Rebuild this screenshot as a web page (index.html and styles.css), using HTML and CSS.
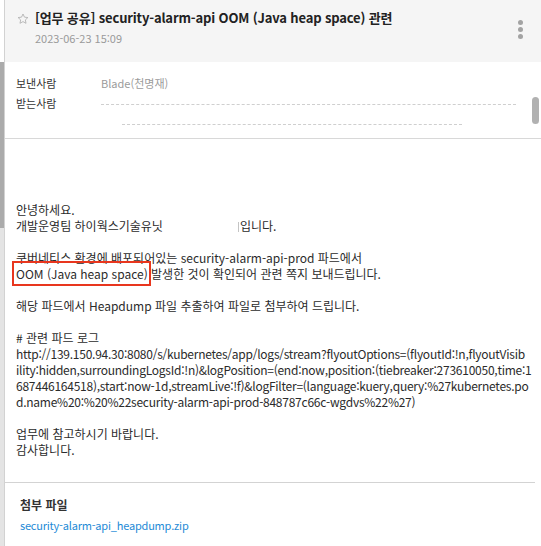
FILE: index.html
```html
<!DOCTYPE html>
<html lang="ko">
<head>
<meta charset="utf-8">
<title>[업무 공유] security-alarm-api OOM (Java heap space) 관련</title>
<link rel="stylesheet" href="styles.css">
</head>
<body>
<div class="frame">
  <div class="rail">
    <div class="rail-top"></div>
    <div class="rail-dark"></div>
    <div class="rail-light"></div>
  </div>
  <div class="main">
    <header class="head">
      <svg class="star" width="12" height="12" viewBox="0 0 24 24" aria-hidden="true">
        <path d="M12 2l2.95 6.3 6.85.8-5.1 4.7 1.35 6.8L12 17.2l-6.05 3.4 1.35-6.8-5.1-4.7 6.85-.8z" fill="none" stroke="#b0b0b0" stroke-width="1.7" stroke-linejoin="round"/>
      </svg>
      <div class="head-text">
        <h1 class="title">[업무 공유] security-alarm-api OOM (Java heap space) 관련</h1>
        <div class="date">2023-06-23 15:09</div>
      </div>
      <div class="kebab"><span></span><span></span><span></span></div>
    </header>

    <section class="info">
      <div class="row"><span class="label">보낸사람</span><span class="value">Blade(천명재)</span></div>
      <div class="row"><span class="label">받는사람</span><span class="blur blur-a"></span></div>
      <div class="row"><span class="label"></span><span class="blur blur-b"></span></div>
      <div class="thumb"></div>
    </section>

    <section class="content">
      <p>안녕하세요.<br>개발운영팀 하이웍스기술유닛<span class="gap"></span><span class="tick"></span>입니다.</p>
      <p>쿠버네티스 환경에 배포되어있는 security-alarm-api-prod 파드에서<br><span class="mark">OOM (Java heap space)</span> 발생한 것이 확인되어 관련 쪽지 보내드립니다.</p>
      <p>해당 파드에서 Heapdump 파일 추출하여 파일로 첨부하여 드립니다.</p>
      <p># 관련 파드 로그<br><span class="url">http://139.150.94.30:8080/s/kubernetes/app/logs/stream?flyoutOptions=(flyoutId:!n,flyoutVisib<br>ility:hidden,surroundingLogsId:!n)&amp;logPosition=(end:now,position:(tiebreaker:273610050,time:1<br>687446164518),start:now-1d,streamLive:!f)&amp;logFilter=(language:kuery,query:%27kubernetes.po<br>d.name%20:%20%22security-alarm-api-prod-848787c66c-wgdvs%22%27)</span></p>
      <p>업무에 참고하시기 바랍니다.<br>감사합니다.</p>
    </section>

    <section class="attach">
      <div class="attach-title">첨부 파일</div>
      <a class="attach-link" href="#">security-alarm-api_heapdump.zip</a>
    </section>
  </div>
</div>
</body>
</html>
```

FILE: styles.css
```css
* { box-sizing: border-box; }
html, body { margin: 0; padding: 0; background: #fff; }
body {
  font-family: "Noto Sans CJK KR", "Noto Sans", sans-serif;
  color: #2b2b2b;
  width: 541px;
  height: 546px;
  overflow: hidden;
}
.frame { display: flex; height: 546px; }
.rail {
  width: 5px;
  flex: none;
  display: flex;
  flex-direction: column;
  border-right: 1px solid #d2d2d2;
}
.rail-top { height: 62px; background: #fff; }
.rail-dark { height: 166px; background: #ababab; }
.rail-light { flex: 1; background: #e4e4e4; }

.main { flex: 1; min-width: 0; display: flex; flex-direction: column; }

.head {
  height: 62px;
  background: #f5f5f5;
  display: flex;
  align-items: flex-start;
  padding: 9px 0 0 12px;
}
.star { margin-top: 4px; flex: none; }
.head-text { margin-left: 6px; flex: 1; }
.title {
  margin: 0;
  font-size: 13px;
  line-height: 18px;
  font-weight: 700;
  letter-spacing: -0.15px;
  color: #222;
}
.date {
  margin-top: 3px;
  font-size: 11px;
  line-height: 16px;
  color: #9a9a9a;
}
.kebab {
  display: flex;
  flex-direction: column;
  gap: 2px;
  margin: 11px 18px 0 0;
}
.kebab span {
  width: 5px;
  height: 5px;
  border-radius: 50%;
  background: #a3a3a3;
}

.info {
  position: relative;
  padding: 11px 0 5px 11px;
  border-bottom: 1px solid #d8d8d8;
}
.row { display: flex; align-items: center; height: 20px; font-size: 11px; }
.label { width: 85px; color: #333; flex: none; }
.value { color: #9b9b9b; }
.blur {
  display: block;
  height: 1px;
  border-top: 1px dashed #cfcfcf;
  margin-top: 2px;
}
.blur-a { width: 415px; }
.blur-b { width: 340px; margin-left: 21px; }
.thumb {
  position: absolute;
  right: 2px;
  top: 35px;
  width: 7px;
  height: 27px;
  border-radius: 4px;
  background: #b1b1b1;
}

.content {
  padding: 63px 0 8px 11px;
  font-size: 12px;
  line-height: 16px;
  color: #2b2b2b;
}
.content p { margin: 0 0 16px; }
.gap { display: inline-block; width: 75px; }
.tick {
  display: inline-block;
  width: 1px;
  height: 10px;
  margin-right: 1px;
  background: #c4c4c4;
  vertical-align: -1px;
}
.mark { position: relative; }
.mark::after {
  content: "";
  position: absolute;
  left: -4px;
  right: -3px;
  top: -4px;
  bottom: -4px;
  border: 2px solid #e8361e;
}
.url { white-space: nowrap; letter-spacing: -0.25px; }

.attach {
  border-top: 1px solid #d3d3d3;
  margin-right: 6px;
  padding: 14px 0 0 15px;
}
.attach-title {
  font-size: 12px;
  line-height: 16px;
  font-weight: 700;
  color: #333;
}
.attach-link {
  display: block;
  margin-top: 4px;
  font-size: 11px;
  line-height: 16px;
  letter-spacing: -0.2px;
  color: #1e8ad6;
  text-decoration: none;
}
```
